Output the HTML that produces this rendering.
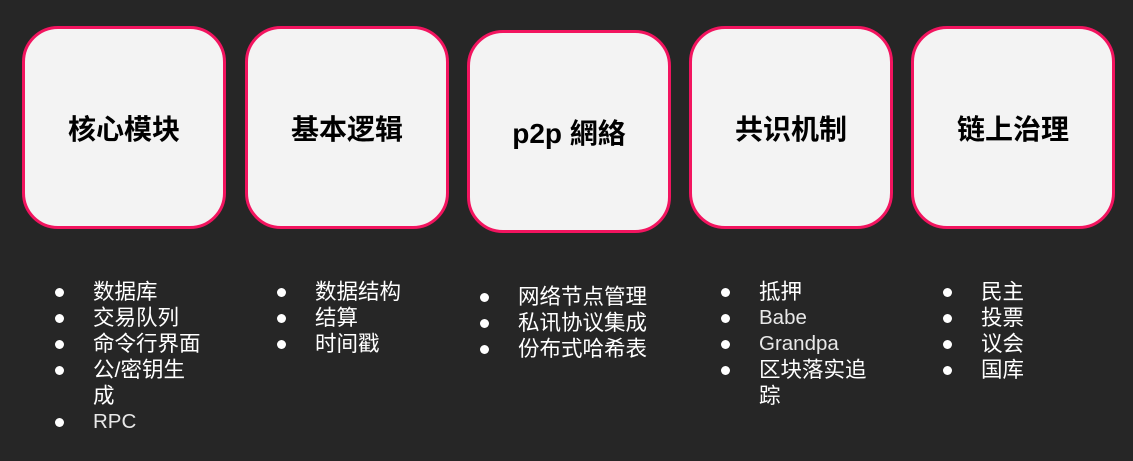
<!DOCTYPE html>
<html><head><meta charset="utf-8"><style>
html,body{margin:0;padding:0}
body{width:1133px;height:461px;background:#262626;position:relative;overflow:hidden;font-family:"Liberation Sans","Noto Sans CJK SC",sans-serif}
.box{position:absolute;width:198px;height:197px;background:#f3f3f3;border:3px solid #f2145f;border-radius:36px;display:flex;align-items:center;justify-content:center;font-weight:bold;font-size:28px;color:#000}
ul{position:absolute;margin:0;padding:0;list-style:none;color:#fff;font-size:21.5px;line-height:26px;width:112px}
li{position:relative;padding-left:0}
li::before{content:"";position:absolute;left:-38px;top:9px;width:9px;height:9px;border-radius:50%;background:#fff}
.l{color:#e8e8e8;font-weight:300;font-size:20.5px}
</style></head><body>
<div class="box" style="left:22px;top:26px">核心模块</div>
<div class="box" style="left:245px;top:26px">基本逻辑</div>
<div class="box" style="left:467px;top:30px">p2p 網絡</div>
<div class="box" style="left:689px;top:26px">共识机制</div>
<div class="box" style="left:911px;top:26px">链上治理</div>
<ul style="left:93px;top:279px"><li>数据库</li><li>交易队列</li><li>命令行界面</li><li>公/密钥生成</li><li class="l">RPC</li></ul>
<ul style="left:315px;top:279px"><li>数据结构</li><li>结算</li><li>时间戳</li></ul>
<ul style="left:518px;top:284px;width:160px"><li>网络节点管理</li><li>私讯协议集成</li><li>份布式哈希表</li></ul>
<ul style="left:759px;top:279px"><li>抵押</li><li class="l">Babe</li><li class="l">Grandpa</li><li>区块落实追踪</li></ul>
<ul style="left:981px;top:279px"><li>民主</li><li>投票</li><li>议会</li><li>国库</li></ul>
</body></html>
